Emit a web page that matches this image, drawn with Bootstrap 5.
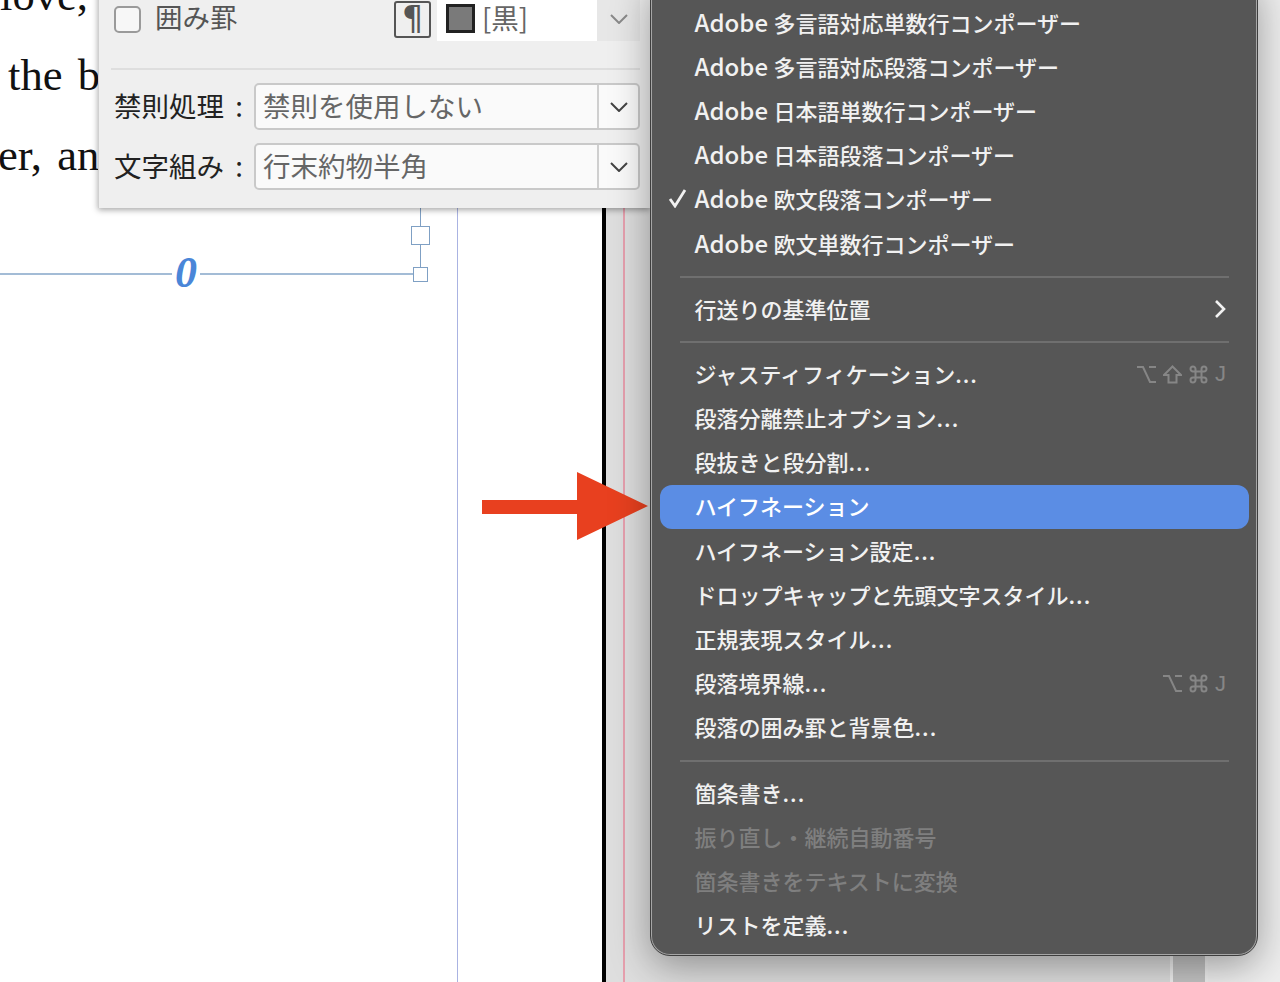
<!DOCTYPE html>
<html lang="ja">
<head>
    <meta charset="utf-8">
    <title>InDesign menu</title>
    <link rel="stylesheet" href="https://cdn.jsdelivr.net/npm/bootstrap@5.3.0/dist/css/bootstrap.min.css">
    <style>
        html, body { height: 982px; overflow: hidden; background: #fff; }
        body { font-family: "Noto Sans CJK JP", "Noto Sans", sans-serif; }

        /* document behind the windows */
        .stage { height: 982px; position: relative; }
        .doc-page { width: 602px; background: #fff; position: relative; overflow: hidden; }
        .doc-text { font: 44.6px/80px "Liberation Serif", serif; color: #111; word-spacing: 4px; white-space: nowrap; margin-top: -45px; }
        .doc-text .line-b { padding-left: 8px; }
        .doc-text .line-c { margin-left: -2px; }
        .guide-v { position: absolute; left: 457px; top: 0; bottom: 0; width: 1px; background: #aab3e2; }
        .path-h { position: absolute; left: 0; top: 273px; width: 414px; height: 2px; background: #a3bcd6; }
        .path-v { position: absolute; left: 420px; top: 200px; width: 1px; height: 70px; background: #7fa0c4; }
        .handle { position: absolute; background: #fff; border: 1px solid #7fa0c4; }
        .handle-a { left: 411px; top: 226px; width: 19px; height: 19px; }
        .handle-b { left: 413px; top: 267px; width: 15px; height: 15px; }
        .zero-mark { position: absolute; left: 172px; top: 250px; padding: 0 3px; background: #fff; font: italic bold 44px/46px "Liberation Serif", serif; color: #4a86d8; }
        .spine { width: 4px; background: #000; }
        .pasteboard { background: linear-gradient(90deg, #dedede 0, #dedede 564px, #eeeeee 565px); padding-left: 17px; }
        .bleed-line { width: 2px; height: 982px; background: #e6a0ae; }
        .scroll-strip { position: absolute; left: 1170px; top: 940px; width: 38px; height: 42px; background: #c4c4c4; border-left: 3px solid #f0f0f0; border-right: 3px solid #f0f0f0; }

        /* paragraph panel */
        .para-panel { position: absolute; left: 98px; top: -40px; width: 552px; height: 248px; background: #efefef; border-left: 1px solid #d0d0d0; box-shadow: 0 2px 6px rgba(0,0,0,.35); padding: 41px 10px 0 15px; font-size: 27.5px; color: #222; }
        .top-row { height: 37px; margin-bottom: 30px; }
        .check-box.form-check-input { width: 27px; height: 27px; margin: 0 14px 0 0; background-color: #f7f7f7; border: 2px solid #9a9a9a; border-radius: 5px; flex: none; }
        .box-label { color: #555; line-height: 37px; padding-bottom: 6px; }
        .pilcrow-btn { width: 37px; height: 37px; margin-left: auto; border: 2px solid #555; border-radius: 3px; background: #efefef; color: #555; font: 34px/31px "DejaVu Sans", sans-serif; text-align: center; overflow: hidden; }
        .swatch-field { width: 160px; height: 45px; margin: -5px 0 0 6px; padding-left: 9px; background: #fff; color: #666; align-self: flex-start; }
        .swatch-box { width: 29px; height: 29px; margin-right: 8px; background: #7a7a7a; border: 3px solid #222; flex: none; }
        .swatch-name { margin-left: -1px; padding-bottom: 1px; }
        .swatch-btn { width: 43px; height: 45px; margin-top: -5px; background: #e7e7e7; align-self: flex-start; }
        .panel-rule { height: 2px; background: #dedede; margin: 0 0 13px -3px; }
        .field-row { height: 47px; margin-bottom: 13px; }
        .field-label { width: 140px; flex: none; white-space: nowrap; word-spacing: 5px; padding-bottom: 1px; }
        .combo { height: 47px; flex-wrap: nowrap; border: 2px solid #c9c9c9; border-radius: 5px; background: #fafafa; overflow: hidden; }
        .combo-text { flex: 1; padding: 0 7px; line-height: 41px; color: #666; white-space: nowrap; }
        .combo-btn { width: 41px; border-left: 2px solid #cfcfcf; }

        /* context menu */
        .ctx-menu.dropdown-menu {
            --bs-dropdown-bg: #565656;
            --bs-dropdown-border-color: #3e3e3e;
            --bs-dropdown-border-radius: 20px;
            --bs-dropdown-padding-y: 0;
            --bs-dropdown-font-size: 22px;
            --bs-dropdown-link-color: #f1f1f1;
            --bs-dropdown-link-hover-color: #f1f1f1;
            --bs-dropdown-link-hover-bg: transparent;
            --bs-dropdown-link-active-color: #fff;
            --bs-dropdown-link-active-bg: #5b8de4;
            --bs-dropdown-link-disabled-color: #7f7f7f;
            --bs-dropdown-divider-bg: #6f6f6f;
            --bs-dropdown-item-padding-y: 0;
            --bs-dropdown-item-padding-x: 0;
            --bs-dropdown-item-border-radius: 12px;
            position: absolute; left: 650px; top: -25px; width: 608px; height: 981px;
            padding-top: 25px; box-shadow: inset 0 0 0 1px #a6a6a6, 0 10px 38px rgba(0,0,0,.36);
        }
        .ctx-menu li { margin: 0 8px 0 9px; }
        .ctx-menu .dropdown-item { height: 44.2px; padding: 0 23px 3px 34.5px; display: flex; align-items: center; justify-content: space-between; line-height: 1; font-weight: 500; }
        .ctx-menu .dropdown-divider { margin: 9.5px 20px; height: 2px; border-top: 2px solid var(--bs-dropdown-divider-bg); opacity: 1; }
        .check-mark { width: 27px; margin-left: -27px; flex: none; }
        .item-name { margin-right: auto; white-space: nowrap; }
        .brand-word { font-size: 24px; }
        .dots { letter-spacing: 1px; }
        .sub-arrow { margin-top: 3px; }
        .keys { gap: 7px; margin-top: 3px; color: #868686; font: 22px/1 "Liberation Sans", sans-serif; }
        .keys svg { fill: none; stroke: #868686; stroke-width: 2; }

        .call-out { position: absolute; left: 480px; top: 470px; }
    </style>
</head>
<body>
    <div class="stage d-flex">
        <div class="doc-page">
            <div class="doc-text">
                <div>love,</div>
                <div class="line-b">the b</div>
                <div class="line-c">er, an</div>
            </div>
            <div class="guide-v"></div>
            <div class="path-h"></div>
            <div class="path-v"></div>
            <div class="handle handle-a"></div>
            <div class="handle handle-b"></div>
            <div class="zero-mark">0</div>
        </div>
        <div class="spine"></div>
        <div class="pasteboard flex-grow-1"><div class="bleed-line"></div></div>

        <div class="scroll-strip"></div>

        <div class="para-panel">
            <div class="top-row d-flex align-items-center">
                <input class="check-box form-check-input" type="checkbox" aria-label="囲み罫">
                <span class="box-label">囲み罫</span>
                <div class="pilcrow-btn">¶</div>
                <div class="swatch-field d-flex align-items-center"><span class="swatch-box"></span><span class="swatch-name">[黒]</span></div>
                <div class="swatch-btn d-flex align-items-center justify-content-center">
                    <svg width="18" height="10" viewBox="0 0 18 10"><path d="M1 1l8 8 8-8" fill="none" stroke="#8a8a8a" stroke-width="2"/></svg>
                </div>
            </div>
            <div class="panel-rule"></div>
            <div class="field-row d-flex align-items-center">
                <span class="field-label">禁則処理 :</span>
                <div class="combo d-flex flex-grow-1">
                    <span class="combo-text">禁則を使用しない</span>
                    <span class="combo-btn d-flex align-items-center justify-content-center">
                        <svg width="18" height="10" viewBox="0 0 18 10"><path d="M1 1l8 8 8-8" fill="none" stroke="#444" stroke-width="2"/></svg>
                    </span>
                </div>
            </div>
            <div class="field-row d-flex align-items-center">
                <span class="field-label">文字組み :</span>
                <div class="combo d-flex flex-grow-1">
                    <span class="combo-text">行末約物半角</span>
                    <span class="combo-btn d-flex align-items-center justify-content-center">
                        <svg width="18" height="10" viewBox="0 0 18 10"><path d="M1 1l8 8 8-8" fill="none" stroke="#444" stroke-width="2"/></svg>
                    </span>
                </div>
            </div>
        </div>

        <ul class="ctx-menu dropdown-menu show list-unstyled">
            <li><a class="dropdown-item" href="#"><span class="item-name"><span class="brand-word">Adobe </span>多言語対応単数行コンポーザー</span></a></li>
            <li><a class="dropdown-item" href="#"><span class="item-name"><span class="brand-word">Adobe </span>多言語対応段落コンポーザー</span></a></li>
            <li><a class="dropdown-item" href="#"><span class="item-name"><span class="brand-word">Adobe </span>日本語単数行コンポーザー</span></a></li>
            <li><a class="dropdown-item" href="#"><span class="item-name"><span class="brand-word">Adobe </span>日本語段落コンポーザー</span></a></li>
            <li><a class="dropdown-item" href="#"><svg class="check-mark" height="20" viewBox="0 0 27 20"><path d="M2 11l5 7L17 2" fill="none" stroke="#f1f1f1" stroke-width="2.8"/></svg><span class="item-name"><span class="brand-word">Adobe </span>欧文段落コンポーザー</span></a></li>
            <li><a class="dropdown-item" href="#"><span class="item-name"><span class="brand-word">Adobe </span>欧文単数行コンポーザー</span></a></li>
            <li><hr class="dropdown-divider"></li>
            <li><a class="dropdown-item" href="#"><span class="item-name">行送りの基準位置</span><svg class="sub-arrow" width="12" height="20" viewBox="0 0 12 20"><path d="M2 2l8 8-8 8" fill="none" stroke="#f1f1f1" stroke-width="2.6"/></svg></a></li>
            <li><hr class="dropdown-divider"></li>
            <li><a class="dropdown-item" href="#"><span class="item-name">ジャスティフィケーション<span class="dots">...</span></span>
                <span class="keys d-flex align-items-center">
                    <svg width="19" height="19" viewBox="0 0 19 19"><path d="M0 2h6l7 15h6M12 2h7"/></svg>
                    <svg width="19" height="19" viewBox="0 0 19 19"><path d="M9.5 1.5L18 10h-4.5v7.5h-8V10H1z"/></svg>
                    <svg width="19" height="19" viewBox="0 0 19 19"><path d="M6.5 6.5h6v6h-6zM6.5 6.5H4A2.5 2.5 0 1 1 6.5 4zM12.5 6.5V4A2.5 2.5 0 1 1 15 6.5zM12.5 12.5H15A2.5 2.5 0 1 1 12.5 15zM6.5 12.5V15A2.5 2.5 0 1 1 4 12.5z"/></svg>
                    <span>J</span>
                </span></a></li>
            <li><a class="dropdown-item" href="#"><span class="item-name">段落分離禁止オプション<span class="dots">...</span></span></a></li>
            <li><a class="dropdown-item" href="#"><span class="item-name">段抜きと段分割<span class="dots">...</span></span></a></li>
            <li><a class="dropdown-item active" href="#"><span class="item-name">ハイフネーション</span></a></li>
            <li><a class="dropdown-item" href="#"><span class="item-name">ハイフネーション設定<span class="dots">...</span></span></a></li>
            <li><a class="dropdown-item" href="#"><span class="item-name">ドロップキャップと先頭文字スタイル<span class="dots">...</span></span></a></li>
            <li><a class="dropdown-item" href="#"><span class="item-name">正規表現スタイル<span class="dots">...</span></span></a></li>
            <li><a class="dropdown-item" href="#"><span class="item-name">段落境界線<span class="dots">...</span></span>
                <span class="keys d-flex align-items-center">
                    <svg width="19" height="19" viewBox="0 0 19 19"><path d="M0 2h6l7 15h6M12 2h7"/></svg>
                    <svg width="19" height="19" viewBox="0 0 19 19"><path d="M6.5 6.5h6v6h-6zM6.5 6.5H4A2.5 2.5 0 1 1 6.5 4zM12.5 6.5V4A2.5 2.5 0 1 1 15 6.5zM12.5 12.5H15A2.5 2.5 0 1 1 12.5 15zM6.5 12.5V15A2.5 2.5 0 1 1 4 12.5z"/></svg>
                    <span>J</span>
                </span></a></li>
            <li><a class="dropdown-item" href="#"><span class="item-name">段落の囲み罫と背景色<span class="dots">...</span></span></a></li>
            <li><hr class="dropdown-divider"></li>
            <li><a class="dropdown-item" href="#"><span class="item-name">箇条書き<span class="dots">...</span></span></a></li>
            <li><a class="dropdown-item disabled" href="#"><span class="item-name">振り直し・継続自動番号</span></a></li>
            <li><a class="dropdown-item disabled" href="#"><span class="item-name">箇条書きをテキストに変換</span></a></li>
            <li><a class="dropdown-item" href="#"><span class="item-name">リストを定義<span class="dots">...</span></span></a></li>
        </ul>

        <svg class="call-out" width="172" height="72" viewBox="0 0 172 72"><path d="M2 30h95V2l71 34-71 34V44H2z" fill="#e8401f"/></svg>
    </div>
    <script src="https://cdn.jsdelivr.net/npm/bootstrap@5.3.0/dist/js/bootstrap.bundle.min.js"></script>
</body>
</html>
